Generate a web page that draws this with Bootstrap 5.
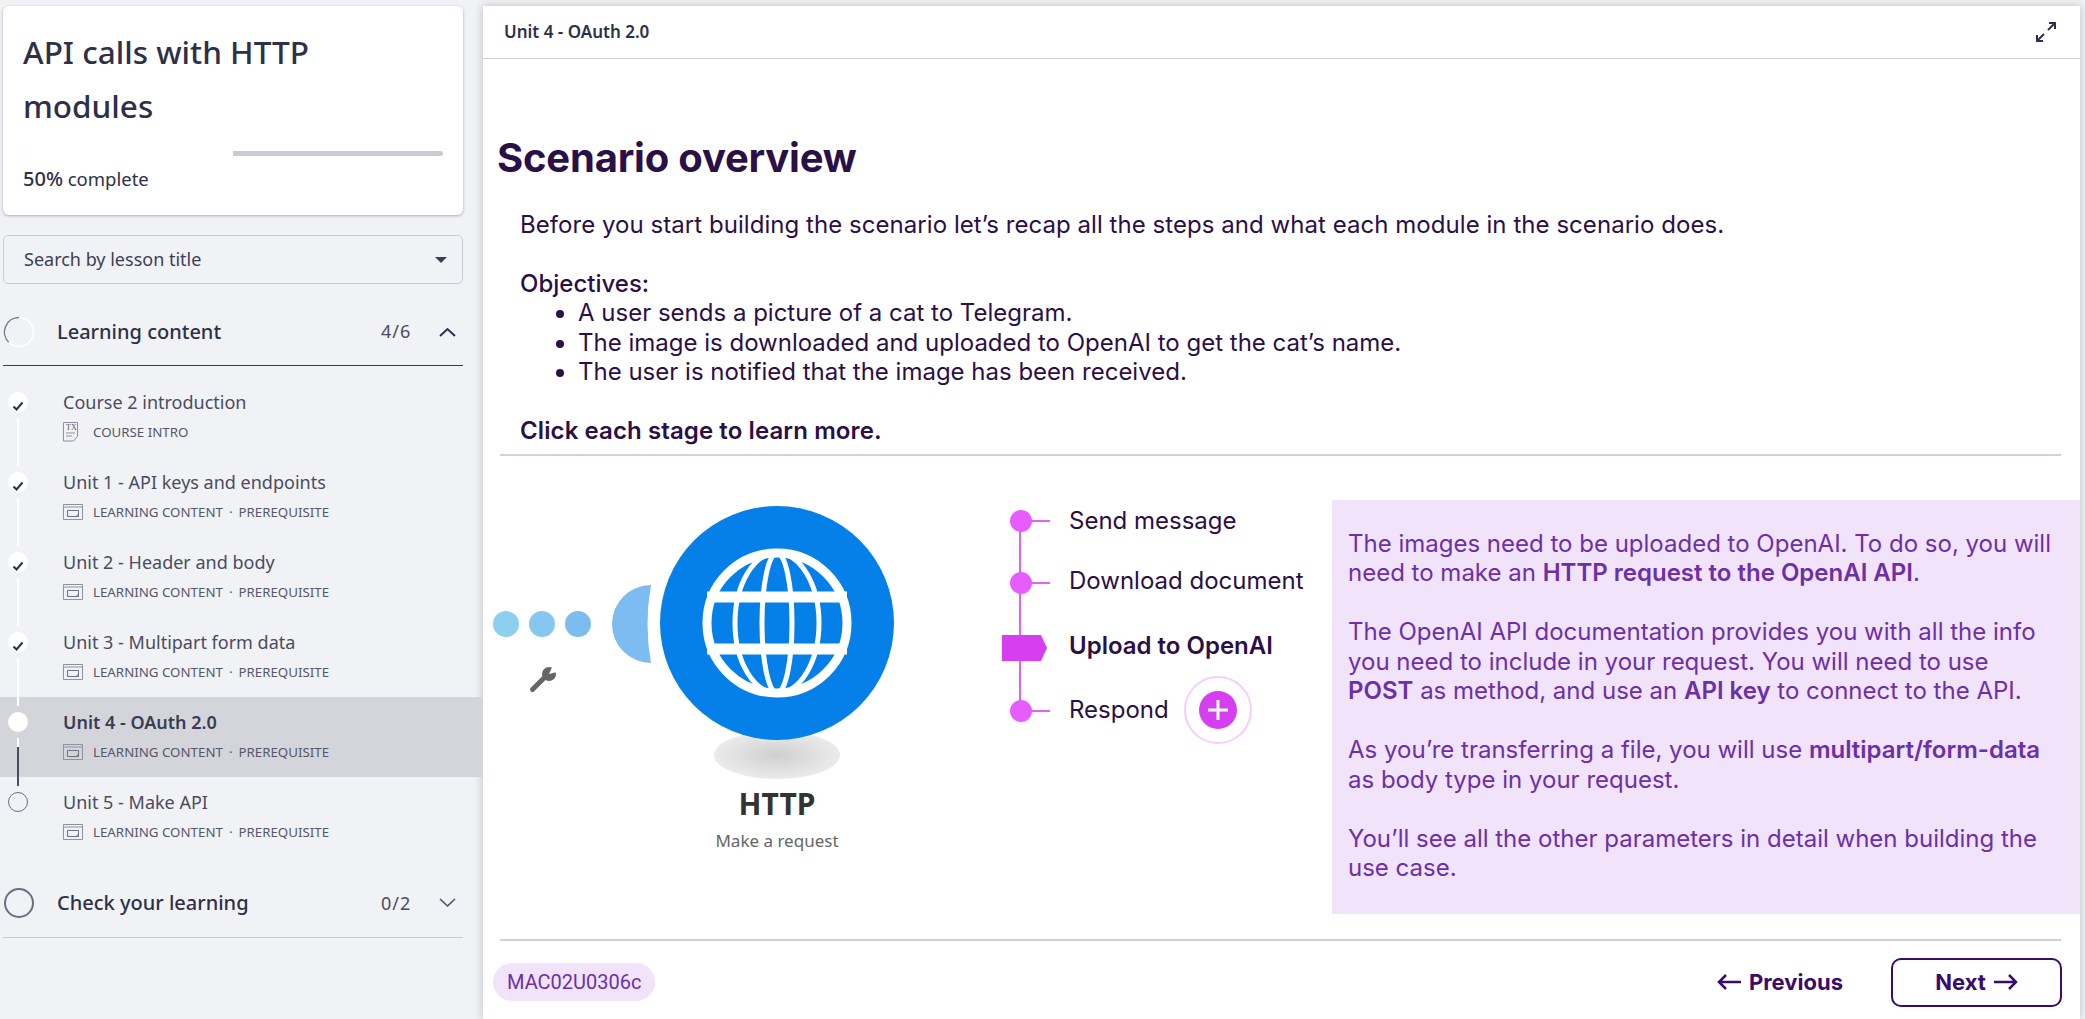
<!DOCTYPE html>
<html lang="en">
<head>
    <meta charset="UTF-8">
    <meta name="viewport" content="width=device-width, initial-scale=1.0">
    <title>Scenario overview</title>
    <link href="https://cdn.jsdelivr.net/npm/bootstrap@5.3.0/dist/css/bootstrap.min.css" rel="stylesheet">
    <style>
        html, body { height: 100%; }
        body {
            background: #f1f2f5;
            font-family: "Noto Sans", sans-serif;
            color: #2d3047;
            overflow: hidden;
        }

        /* Sidebar */
        .side-col { width: 483px; flex: none; }
        .course-card {
            margin: 6px 20px 0 3px;
            height: 209px;
            padding: 19px 20px 0;
            border: 0;
            border-radius: 6px;
            box-shadow: 0 1px 3px rgba(40, 42, 60, .35);
        }
        .course-title { max-width: 340px; font-size: 31.5px; line-height: 54px; font-weight: 500; margin: 0; color: #2d3047; }
        .course-bar { height: 5px; margin-top: 18px; background: #c9cbd6; border-radius: 3px; }
        .course-bar .progress-bar { background: #fff; }
        .course-pct { font-size: 18.5px; margin-top: 9px; line-height: 28px; }
        .course-pct b { font-weight: 500; font-size: 20px; }
        .lesson-search {
            margin: 20px 20px 0 3px;
            width: 460px;
            height: 49px;
            padding: 0 15px 0 20px;
            border: 1px solid #c9cbd6;
            border-radius: 5px;
            font-size: 18px;
            color: #3c3e55;
        }
        .lesson-search::after { border-top-width: .38em; border-left-width: .34em; border-right-width: .34em; }
        .lesson-search:hover, .lesson-search:active { border-color: #c9cbd6; color: #3c3e55; }
        .section-head { margin: 12px 20px 0 3px; height: 70px; padding-top: 2px; border-bottom: 1px solid #3a3c55; }
        .section-head.is-closed { margin-top: 11px; padding-top: 1px; border-bottom-color: #c9cbd6; }
        .section-ring { width: 32px; flex: none; }
        .section-name { margin-left: 22px; font-size: 20px; font-weight: 500; }
        .section-count { margin-left: auto; font-size: 18px; width: 58px; color: #4a4c60; letter-spacing: 1px; }
        .section-chevron { width: 17px; margin-right: 7px; }
        .lesson-list { margin-top: 11px; }
        .lesson-row {
            position: relative;
            height: 80px;
            padding: 11px 0 0 63px;
            background: transparent;
            border: 0;
            border-radius: 0 !important;
            color: #4a4c60;
        }
        .lesson-row.is-current { background: #d4d5da; }
        .lesson-row.is-current .lesson-name { font-weight: 600; color: #3a3c55; }
        .lesson-name { font-size: 18px; line-height: 28px; }
        .lesson-meta { font-size: 13.3px; line-height: 20px; margin-top: 6px; text-transform: uppercase; color: #55576b; }
        .lesson-meta svg { margin-right: 10px; flex: none; }
        .lesson-meta svg.meta-doc { margin-right: 14px; }
        .lesson-meta i { font-style: normal; margin: 0 6px; }
        .step-dot {
            position: absolute;
            left: 8px;
            top: 15px;
            width: 20px;
            height: 20px;
            border-radius: 50%;
            background: #fff;
            z-index: 2;
        }
        .step-dot.is-empty { background: transparent; border: 1px solid #6b6d80; }
        .step-link {
            position: absolute;
            left: 17px;
            top: 41px;
            width: 2px;
            height: 48px;
            background: #fff;
            z-index: 2;
        }
        .step-link.is-next { background: linear-gradient(#fff 9px, #4a4c64 9px); }

        /* Main panel */
        .main-col {
            flex: 1;
            margin: 6px 5px 0 0;
            background: #fff;
            color: #2b0f47;
            font-family: Inter, sans-serif;
            box-shadow: 0 0 8px rgba(60, 62, 80, .3);
            min-width: 0;
        }
        .unit-bar {
            height: 53px;
            padding: 0 23px 0 21px;
            border-bottom: 1px solid #cfcde0;
            font-family: "Noto Sans", sans-serif;
            font-size: 17px;
            font-weight: 600;
            color: #2d3047;
        }
        .scene-title { margin: 75px 0 0 14px; font-size: 40px; line-height: 48px; font-weight: 700; letter-spacing: -.2px; color: #2b0f47; }
        .scene-text { margin: 28px 0 0 37px; font-size: 24px; line-height: 30px; letter-spacing: .05px; }
        .scene-goal { margin: 29px 0 0 37px; font-size: 24px; line-height: 30px; font-weight: 500; }
        .scene-goals { margin: -1px 0 0; padding: 0 0 0 95px; font-size: 24px; line-height: 29.5px; list-style: disc; }
        .scene-click { margin: 29px 0 0 37px; font-size: 24px; line-height: 30px; font-weight: 600; letter-spacing: .1px; }
        .scene-rule { height: 2px; margin: 8px 19px 0 17px; background: #d5d0d8; }
        .scene-row { height: 434px; margin-top: 24px; }
        .module-art { width: 517px; height: 434px; flex: none; display: block; }
        .stage-list { position: relative; width: 332px; flex: none; padding-top: 9px; }
        .stage-line { position: absolute; left: 19px; top: 41px; width: 2px; height: 190px; background: #e75cff; }
        .stage-row { position: relative; height: 63px; padding-left: 69px; font-size: 24px; }
        .stage-row:nth-of-type(1) { height: 62px; padding-top: 2px; }
        .stage-row:nth-of-type(2) { height: 65px; padding-bottom: 5px; }
        .stage-row:nth-of-type(3) { padding-bottom: 2px; }
        .stage-row.is-open { font-weight: 600; }
        .stage-pin { position: absolute; left: 10px; top: 21px; }
        .stage-pin.is-open { left: 2px; top: 19px; }
        .stage-plus {
            width: 68px;
            height: 68px;
            margin-left: 15px;
            border: 2px solid #f6cdfc;
            border-radius: 50%;
        }
        .stage-plus span {
            width: 38px;
            height: 38px;
            border-radius: 50%;
            background: #d63ff0;
        }
        .info-box {
            flex: 1;
            height: 414px;
            margin-top: 20px;
            padding: 29px 24px 0 16px;
            background: #f0e3fa;
            color: #6d2fa8;
            font-size: 24px;
            line-height: 29.5px;
        }
        .info-box p { margin: 0 0 29.5px; }
        .info-box b { font-weight: 600; }
        .foot-rule { height: 2px; margin: 25px 19px 0 17px; background: #d5cdd8; }
        .foot-row { height: 83px; padding: 0 18px 0 10px; }
        .code-chip {
            height: 38px;
            padding: 0 14px;
            border-radius: 19px;
            background: #f0e3fa;
            color: #6d2fa8;
            font-family: Roboto, sans-serif;
            font-size: 20px;
        }
        .nav-prev, .nav-next {
            font-size: 22px;
            font-weight: 700;
            color: #3a0a6e;
            padding: 0;
        }
        .nav-prev { margin-right: 47px; }
        .nav-next { width: 171px; height: 49px; border: 2px solid #3a0a6e; border-radius: 10px; }
    </style>
</head>
<body class="d-flex">
    <svg width="0" height="0" class="position-absolute">
        <symbol id="tick" viewBox="0 0 20 20"><path d="M5.500 10.500 8.500 13.500 14.500 6.500" fill="none" stroke="#2d3047" stroke-width="2"/></symbol>
        <symbol id="slide" viewBox="0 0 20 16"><path d="M.5.5h19v15H.5z" fill="none" stroke="#8f91a0"/><path d="M.5 3h19" stroke="#8f91a0"/><path d="M4.500 6.500h11v6h-11z" fill="none" stroke="#6f7182" stroke-width="1"/><path d="M12 12.500c2 0 3-1 3.500-3" fill="none" stroke="#6f7182"/></symbol>
    </svg>

    <!-- Sidebar -->
    <aside class="side-col">
        <div class="card course-card">
            <h2 class="course-title">API calls with HTTP modules</h2>
            <div class="progress course-bar"><div class="progress-bar" style="width: 50%"></div></div>
            <div class="course-pct"><b>50%</b> complete</div>
        </div>

        <button type="button" class="btn dropdown-toggle lesson-search d-flex align-items-center justify-content-between">Search by lesson title</button>

        <div class="section-head d-flex align-items-center">
            <svg class="section-ring" width="32" height="32" viewBox="0 0 32 32"><circle cx="16" cy="16" r="14.500" fill="none" stroke="#fff" stroke-width="1.500"/><path d="M5.700 26.200A14.500 14.500 0 0 1 16 1.500" fill="none" stroke="#777989" stroke-width="1.500"/></svg>
            <span class="section-name">Learning content</span>
            <span class="section-count">4/6</span>
            <svg class="section-chevron" height="10" viewBox="0 0 17 10"><path d="M1 9 8.500 2 16 9" fill="none" stroke="#2d3047" stroke-width="2"/></svg>
        </div>

        <ul class="list-group lesson-list">
            <li class="list-group-item lesson-row">
                <span class="step-dot"><svg width="20" height="20"><use href="#tick"/></svg></span><span class="step-link"></span>
                <div class="lesson-name">Course 2 introduction</div>
                <div class="lesson-meta d-flex align-items-center">
                    <svg class="meta-doc" width="16" height="20" viewBox="0 0 16 20"><path d="M.5.5h14v14l-4 4.500H.5z" fill="none" stroke="#8f91a0"/><text x="3" y="8" font-size="8" font-family="Liberation Serif, serif" fill="#55576b">Tx</text><path d="M3 11h9M3 14h6" stroke="#8f91a0"/></svg>
                    Course intro
                </div>
            </li>
            <li class="list-group-item lesson-row">
                <span class="step-dot"><svg width="20" height="20"><use href="#tick"/></svg></span><span class="step-link"></span>
                <div class="lesson-name">Unit 1 - API keys and endpoints</div>
                <div class="lesson-meta d-flex align-items-center"><svg width="20" height="16"><use href="#slide"/></svg>Learning content<i>·</i>Prerequisite</div>
            </li>
            <li class="list-group-item lesson-row">
                <span class="step-dot"><svg width="20" height="20"><use href="#tick"/></svg></span><span class="step-link"></span>
                <div class="lesson-name">Unit 2 - Header and body</div>
                <div class="lesson-meta d-flex align-items-center"><svg width="20" height="16"><use href="#slide"/></svg>Learning content<i>·</i>Prerequisite</div>
            </li>
            <li class="list-group-item lesson-row">
                <span class="step-dot"><svg width="20" height="20"><use href="#tick"/></svg></span><span class="step-link"></span>
                <div class="lesson-name">Unit 3 - Multipart form data</div>
                <div class="lesson-meta d-flex align-items-center"><svg width="20" height="16"><use href="#slide"/></svg>Learning content<i>·</i>Prerequisite</div>
            </li>
            <li class="list-group-item lesson-row is-current">
                <span class="step-dot"></span><span class="step-link is-next"></span>
                <div class="lesson-name">Unit 4 - OAuth 2.0</div>
                <div class="lesson-meta d-flex align-items-center"><svg width="20" height="16"><use href="#slide"/></svg>Learning content<i>·</i>Prerequisite</div>
            </li>
            <li class="list-group-item lesson-row">
                <span class="step-dot is-empty"></span>
                <div class="lesson-name">Unit 5 - Make API</div>
                <div class="lesson-meta d-flex align-items-center"><svg width="20" height="16"><use href="#slide"/></svg>Learning content<i>·</i>Prerequisite</div>
            </li>
        </ul>

        <div class="section-head is-closed d-flex align-items-center">
            <svg class="section-ring" width="32" height="32" viewBox="0 0 32 32"><circle cx="16" cy="16" r="14" fill="none" stroke="#6b6d80" stroke-width="2"/></svg>
            <span class="section-name">Check your learning</span>
            <span class="section-count">0/2</span>
            <svg class="section-chevron" height="10" viewBox="0 0 17 10"><path d="M1 1 8.500 8 16 1" fill="none" stroke="#4a4c60" stroke-width="1.500"/></svg>
        </div>
    </aside>

    <!-- Main content -->
    <main class="main-col">
        <div class="unit-bar d-flex align-items-center justify-content-between">
            <span>Unit 4 - OAuth 2.0</span>
            <svg width="22" height="22" viewBox="0 0 22 22"><path d="M13 9 20 2M20 8V2h-6M9 13 2 20M2 14v6h6" fill="none" stroke="#2d3047" stroke-width="2"/></svg>
        </div>

        <h1 class="scene-title">Scenario overview</h1>
        <p class="scene-text">Before you start building the scenario let’s recap all the steps and what each module in the scenario does.</p>
        <div class="scene-goal">Objectives:</div>
        <ul class="scene-goals">
            <li>A user sends a picture of a cat to Telegram.</li>
            <li>The image is downloaded and uploaded to OpenAI to get the cat’s name.</li>
            <li>The user is notified that the image has been received.</li>
        </ul>
        <div class="scene-click">Click each stage to learn more.</div>
        <div class="scene-rule"></div>

        <div class="scene-row d-flex">
            <svg class="module-art" viewBox="483 480 517 434">
                <defs>
                    <radialGradient id="module-shade"><stop offset="0" stop-color="#cfcfcf"/><stop offset="1" stop-color="#ebebeb"/></radialGradient>
                </defs>
                <circle cx="506" cy="624" r="13" fill="#8ccfee"/>
                <circle cx="542" cy="624" r="13" fill="#85c7ef"/>
                <circle cx="578" cy="624" r="13" fill="#7dbdee"/>
                <path d="M651 585A39 39 0 0 0 651 663Q644 624 651 585z" fill="#7cbcf0"/>
                <path d="M532.500 689.500 545 677" stroke="#666" stroke-width="5" stroke-linecap="round"/>
                <circle cx="549" cy="674" r="7" fill="#666"/>
                <path d="M549 674 554 663 561 671z" fill="#fff"/>
                <ellipse cx="777" cy="755" rx="63" ry="24" fill="url(#module-shade)"/>
                <circle cx="777" cy="623" r="117" fill="#0580e8"/>
                <g fill="none" stroke="#fff">
                    <circle cx="777" cy="623" r="70" stroke-width="9"/>
                    <ellipse cx="777" cy="623" rx="15" ry="70" stroke-width="5"/>
                    <ellipse cx="777" cy="623" rx="42" ry="70" stroke-width="5"/>
                    <path d="M707 597H847M707 649H847" stroke-width="11"/>
                </g>
                <text x="777" y="815" text-anchor="middle" font-family="Noto Sans, sans-serif" font-size="30" font-weight="700" fill="#333">HTTP</text>
                <text x="777" y="847" text-anchor="middle" font-family="Noto Sans, sans-serif" font-size="17" fill="#666">Make a request</text>
            </svg>

            <div class="stage-list">
                <span class="stage-line"></span>
                <div class="stage-row d-flex align-items-center"><svg class="stage-pin" width="40" height="22" viewBox="0 0 40 22"><circle cx="11" cy="11" r="11" fill="#e75cff"/><path d="M20 11h20" stroke="#e75cff" stroke-width="2"/></svg>Send message</div>
                <div class="stage-row d-flex align-items-center"><svg class="stage-pin" width="40" height="22" viewBox="0 0 40 22"><circle cx="11" cy="11" r="11" fill="#e75cff"/><path d="M20 11h20" stroke="#e75cff" stroke-width="2"/></svg>Download document</div>
                <div class="stage-row is-open d-flex align-items-center"><svg class="stage-pin is-open" width="48" height="26" viewBox="0 0 48 26"><path d="M0 0H39L45 13 39 26H0z" fill="#d63ff0"/></svg>Upload to OpenAI</div>
                <div class="stage-row d-flex align-items-center"><svg class="stage-pin" width="40" height="22" viewBox="0 0 40 22"><circle cx="11" cy="11" r="11" fill="#e75cff"/><path d="M20 11h20" stroke="#e75cff" stroke-width="2"/></svg>Respond
                    <span class="stage-plus d-flex align-items-center justify-content-center"><span class="d-flex align-items-center justify-content-center"><svg width="22" height="22" viewBox="0 0 22 22"><path d="M11 1V21M1 11H21" stroke="#fff" stroke-width="3"/></svg></span></span>
                </div>
            </div>

            <div class="info-box">
                <p>The images need to be uploaded to OpenAI. To do so, you will need to make an <b>HTTP request to the OpenAI API</b>.</p>
                <p>The OpenAI API documentation provides you with all the info you need to include in your request. You will need to use <b>POST</b> as method, and use an <b>API key</b> to connect to the API.</p>
                <p>As you’re transferring a file, you will use <b>multipart/form-data</b> as body type in your request.</p>
                <p>You’ll see all the other parameters in detail when building the use case.</p>
            </div>
        </div>

        <div class="foot-rule"></div>
        <div class="foot-row d-flex align-items-center">
            <span class="code-chip d-flex align-items-center">MAC02U0306c</span>
            <button type="button" class="btn nav-prev ms-auto d-flex align-items-center gap-2"><svg width="24" height="18" viewBox="0 0 24 18"><path d="M24 9H2M9 2 2 9l7 7" fill="none" stroke="#3a0a6e" stroke-width="2.500"/></svg>Previous</button>
            <button type="button" class="btn nav-next d-flex align-items-center justify-content-center gap-2">Next<svg width="24" height="18" viewBox="0 0 24 18"><path d="M0 9H22M15 2l7 7-7 7" fill="none" stroke="#3a0a6e" stroke-width="2.500"/></svg></button>
        </div>
    </main>

    <script src="https://cdn.jsdelivr.net/npm/bootstrap@5.3.0/dist/js/bootstrap.bundle.min.js"></script>
</body>
</html>
